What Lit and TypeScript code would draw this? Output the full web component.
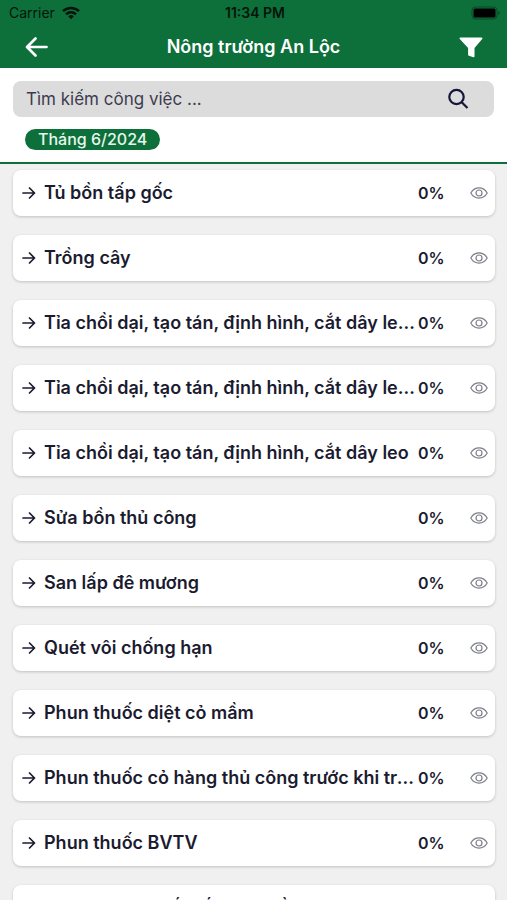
import { LitElement, html, css, svg } from "lit";
import { customElement, property, state } from "lit/decorators.js";

interface Task {
  name: string;
  progress: number;
}

const TASKS: Task[] = [
  "Tủ bồn tấp gốc",
  "Trồng cây",
  "Tỉa chồi dại, tạo tán, định hình, cắt dây leo lần 3",
  "Tỉa chồi dại, tạo tán, định hình, cắt dây leo lần 2",
  "Tỉa chồi dại, tạo tán, định hình, cắt dây leo",
  "Sửa bồn thủ công",
  "San lấp đê mương",
  "Quét vôi chống hạn",
  "Phun thuốc diệt cỏ mầm",
  "Phun thuốc cỏ hàng thủ công trước khi trồng",
  "Phun thuốc BVTV",
  "Phát quang thiết kế hàng trồng",
].map((name) => ({ name, progress: 0 }));

const wifiIcon = svg`<svg width="18" height="14" viewBox="0 0 18 14" aria-hidden="true">
  <g fill="none" stroke="currentColor" stroke-width="2.5">
    <path d="M1 5.2a11.4 11.4 0 0 1 16 0"/>
    <path d="M4 8.3a7.2 7.2 0 0 1 10 0"/>
  </g>
  <path d="M6.2 10.3a4 4 0 0 1 5.6 0L9 13.2z" fill="currentColor"/>
</svg>`;

const batteryIcon = svg`<svg width="30" height="14" viewBox="0 0 30 14" aria-hidden="true">
  <rect x="1" y="1" width="25" height="12" rx="3.5" fill="none" stroke="currentColor" stroke-opacity=".35"/>
  <rect x="2.5" y="2.5" width="22" height="9" rx="1.5" fill="currentColor"/>
  <path d="M27.5 5v4c1.6-.6 1.6-3.4 0-4z" fill="currentColor" fill-opacity=".4"/>
</svg>`;

const backIcon = svg`<svg width="24" height="24" viewBox="0 0 24 24" fill="none" stroke="currentColor"
  stroke-width="2.7" stroke-linecap="round" stroke-linejoin="round" aria-hidden="true">
  <path d="M11.500 3.500 3 12l8.500 8.500M3.500 12h19"/>
</svg>`;

const filterIcon = svg`<svg width="24" height="22" viewBox="0 0 24 22" fill="currentColor" aria-hidden="true">
  <path d="M1.500 1.500h21c1 0 1.300.9.7 1.600L15.500 12v8.500c0 .6-.5.900-1 .8l-4.700-1.500c-.5-.2-.7-.5-.7-1V12L.8 3.100C.2 2.400.5 1.500 1.500 1.500z"/>
</svg>`;

const searchIcon = svg`<svg width="22" height="22" viewBox="0 0 22 22" fill="none" stroke="currentColor"
  stroke-width="2.200" aria-hidden="true">
  <circle cx="9.500" cy="9" r="7.200"/><path d="m14.700 14.200 5.800 5.800"/>
</svg>`;

const arrowIcon = svg`<svg width="14" height="14" viewBox="0 0 14 14" fill="none" stroke="currentColor"
  stroke-width="1.700" stroke-linecap="round" stroke-linejoin="round" aria-hidden="true">
  <path d="M1 7h11.500M7.500 2l5 5-5 5"/>
</svg>`;

const eyeIcon = svg`<svg width="18" height="12" viewBox="0 0 18 12" fill="none" stroke="currentColor"
  stroke-width="1.200" stroke-linejoin="round" aria-hidden="true">
  <path d="M.8 6C2.500 3 5.400.9 9 .9S15.500 3 17.200 6c-1.700 3-4.600 5.100-8.200 5.100S2.500 9 .8 6z"/>
  <circle cx="9" cy="6" r="3"/>
</svg>`;

@customElement("task-card")
class TaskCard extends LitElement {
  @property() name = "";
  @property({ type: Number }) progress = 0;

  static styles = css`
    :host {
      display: block;
    }
    .card {
      display: flex;
      align-items: center;
      height: 46px;
      padding: 0 7px 0 9px;
      border-radius: 8px;
      background: #fff;
      box-shadow: 0 1px 3px rgba(0, 0, 0, 0.2);
      color: #1b1b30;
    }
    svg {
      display: block;
      flex: none;
    }
    .name {
      flex: 1;
      min-width: 0;
      margin-left: 8px;
      font-size: 18px;
      line-height: 24px;
      font-weight: 600;
      white-space: nowrap;
      overflow: hidden;
      text-overflow: ellipsis;
    }
    .progress {
      flex: none;
      width: 52px;
      font-size: 16px;
      line-height: 24px;
      font-weight: 600;
    }
    .view {
      flex: none;
      padding: 8px 0;
      border: 0;
      background: none;
      color: #7c7f88;
      cursor: pointer;
    }
  `;

  render() {
    return html`<div class="card">
      ${arrowIcon}
      <span class="name">${this.name}</span>
      <span class="progress">${this.progress}%</span>
      <button class="view" aria-label="Xem ${this.name}">${eyeIcon}</button>
    </div>`;
  }
}

@customElement("app-root")
class AppRoot extends LitElement {
  @state() private query = "";

  static styles = css`
    :host {
      display: flex;
      flex-direction: column;
      height: 100vh;
      overflow: hidden;
      background: #f0f0f0;
      font-family: Inter, "Noto Sans", sans-serif;
    }
    svg {
      display: block;
    }
    button {
      padding: 0;
      border: 0;
      background: none;
      color: inherit;
      cursor: pointer;
    }
    .top {
      flex: none;
      background: #0d703a;
    }
    .status {
      display: grid;
      grid-template-columns: 1fr auto 1fr;
      align-items: center;
      height: 26px;
      padding: 0 6px 0 9px;
      color: #06140c;
      font-size: 14px;
      line-height: 16px;
    }
    .carrier {
      display: flex;
      align-items: center;
      gap: 7px;
    }
    .clock {
      font-weight: 600;
    }
    .battery {
      justify-self: end;
      color: #000;
    }
    .bar {
      display: grid;
      grid-template-columns: 1fr auto 1fr;
      align-items: center;
      height: 42px;
      padding: 0 24px;
      color: #fff;
    }
    .filter {
      justify-self: end;
    }
    .back {
      justify-self: start;
    }
    h1 {
      margin: 0;
      font-size: 18px;
      line-height: 24px;
      font-weight: 600;
    }
    .tools {
      flex: none;
      padding: 13px 13px 12px;
      border-bottom: 2px solid #0d703a;
      background: #fff;
    }
    .search {
      display: flex;
      align-items: center;
      height: 36px;
      padding: 0 25px 0 13px;
      border-radius: 8px;
      background: #dcdcdc;
      color: #15153a;
    }
    .search input {
      flex: 1;
      min-width: 0;
      padding: 0;
      border: 0;
      outline: 0;
      background: none;
      color: #33334a;
      font: 17px/24px Inter, "Noto Sans", sans-serif;
    }
    .search input::placeholder {
      color: #3c3c50;
      opacity: 1;
    }
    .month {
      display: block;
      margin: 12px 0 0 12px;
      padding: 0 13px;
      border-radius: 12px;
      background: #0d703a;
      color: #e9f7ee;
      font: 500 16px/21px Inter, "Noto Sans", sans-serif;
    }
    .list {
      flex: 1;
      min-height: 0;
      overflow: hidden;
      display: flex;
      flex-direction: column;
      gap: 19px;
      margin: 0;
      padding: 6px 12px 0 13px;
      list-style: none;
    }
  `;

  render() {
    const needle = this.query.trim().toLowerCase();
    const shown = TASKS.filter((t) => t.name.toLowerCase().includes(needle));
    return html`
      <header class="top">
        <div class="status">
          <span class="carrier">Carrier ${wifiIcon}</span>
          <span class="clock">11:34 PM</span>
          <span class="battery">${batteryIcon}</span>
        </div>
        <div class="bar">
          <button class="back" aria-label="Quay lại">${backIcon}</button>
          <h1>Nông trường An Lộc</h1>
          <button class="filter" aria-label="Bộ lọc">${filterIcon}</button>
        </div>
      </header>
      <section class="tools">
        <div class="search">
          <input
            type="text"
            aria-label="Tìm kiếm công việc"
            placeholder="Tìm kiếm công việc ..."
            .value=${this.query}
            @input=${(e: Event) => (this.query = (e.target as HTMLInputElement).value)}
          />
          <button aria-label="Tìm kiếm">${searchIcon}</button>
        </div>
        <button class="month">Tháng 6/2024</button>
      </section>
      <ul class="list">
        ${shown.map(
          (t) => html`<li><task-card .name=${t.name} .progress=${t.progress}></task-card></li>`
        )}
      </ul>
    `;
  }
}
